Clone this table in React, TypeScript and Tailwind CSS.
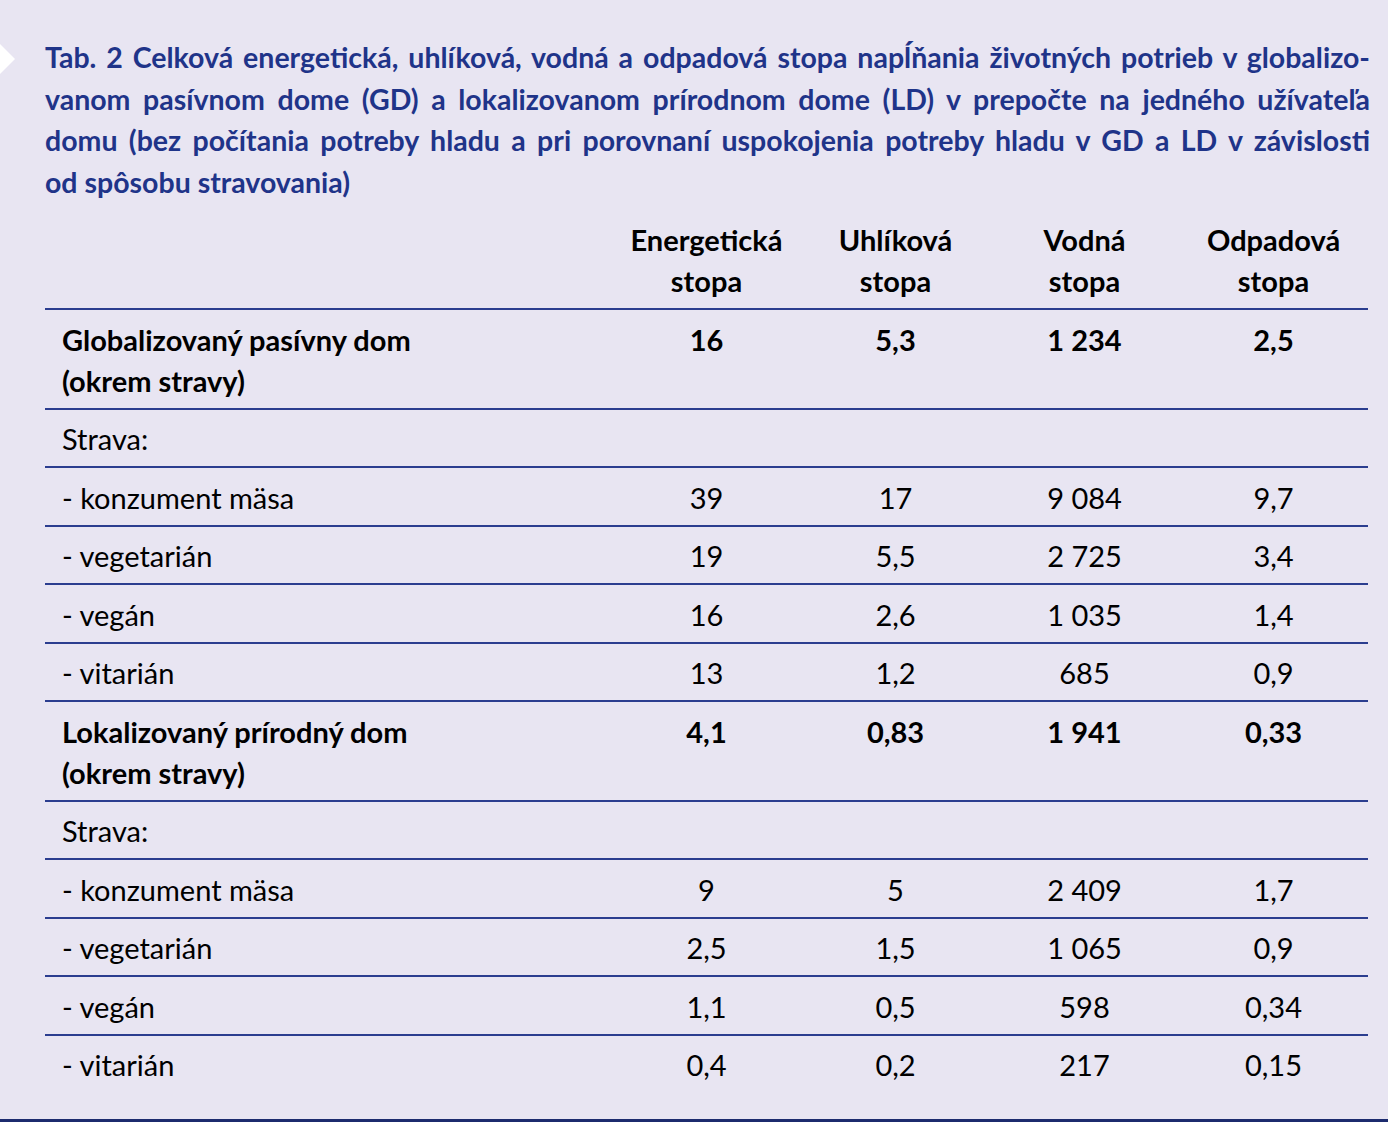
import React from "react";

const LINE = "border-b-2 border-[#2b3d8f]";

type Row = {
  label: string[];
  values: string[];
  bold?: boolean;
  line?: boolean;
};

const ROWS: Row[] = [
  { label: ["Globalizovaný pasívny dom", "(okrem stravy)"], values: ["16", "5,3", "1 234", "2,5"], bold: true, line: true },
  { label: ["Strava:"], values: ["", "", "", ""], line: true },
  { label: ["- konzument mäsa"], values: ["39", "17", "9 084", "9,7"], line: true },
  { label: ["- vegetarián"], values: ["19", "5,5", "2 725", "3,4"], line: true },
  { label: ["- vegán"], values: ["16", "2,6", "1 035", "1,4"], line: true },
  { label: ["- vitarián"], values: ["13", "1,2", "685", "0,9"], line: true },
  { label: ["Lokalizovaný prírodný dom", "(okrem stravy)"], values: ["4,1", "0,83", "1 941", "0,33"], bold: true, line: true },
  { label: ["Strava:"], values: ["", "", "", ""], line: true },
  { label: ["- konzument mäsa"], values: ["9", "5", "2 409", "1,7"], line: true },
  { label: ["- vegetarián"], values: ["2,5", "1,5", "1 065", "0,9"], line: true },
  { label: ["- vegán"], values: ["1,1", "0,5", "598", "0,34"], line: true },
  { label: ["- vitarián"], values: ["0,4", "0,2", "217", "0,15"] },
];

const TITLE = [
  "Tab. 2 Celková energetická, uhlíková, vodná a odpadová stopa napĺňania životných potrieb v globalizo-",
  "vanom pasívnom dome (GD) a lokalizovanom prírodnom dome (LD) v prepočte na jedného užívateľa",
  "domu (bez počítania potreby hladu a pri porovnaní uspokojenia potreby hladu v GD a LD v závislosti",
];

const HEADERS = [
  ["Energetická", "stopa"],
  ["Uhlíková", "stopa"],
  ["Vodná", "stopa"],
  ["Odpadová", "stopa"],
];

function TableRow({ row }: { row: Row }) {
  return (
    <div
      className={`grid grid-cols-[567px_189px_189px_189px_189px] pt-[8.5px] pb-[7px] ${row.line ? LINE : ""} ${
        row.bold ? "font-bold" : ""
      }`}
    >
      <div className="pl-[17px]">
        {row.label.map((l) => (
          <div key={l}>{l}</div>
        ))}
      </div>
      {row.values.map((v, i) => (
        <div key={i} className="text-center">
          {v}
        </div>
      ))}
    </div>
  );
}

export default function App() {
  return (
    <div className="h-[1122px] w-[1388px] bg-[#e8e5f2] flex flex-col font-['Lato','Liberation_Sans',sans-serif] text-black">
      <div className="flex items-start pt-[37px]">
        <svg width="15" height="30" viewBox="0 0 15 30" className="mt-[7px] shrink-0">
          <polygon points="0,0 15,15 0,30" fill="#ffffff" />
        </svg>
        <div className="ml-[30px] w-[1325px] text-[28.5px] leading-[41.5px] font-bold text-[#1f3489]">
          {TITLE.map((t) => (
            <div key={t} className="text-justify [text-align-last:justify]">
              {t}
            </div>
          ))}
          <div>od spôsobu stravovania)</div>
        </div>
      </div>

      <div className="ml-[45px] w-[1323px] mt-[16px] text-[29px] leading-[41px]">
        <div className={`grid grid-cols-[567px_189px_189px_189px_189px] pb-[7px] font-bold ${LINE}`}>
          <div />
          {HEADERS.map((h) => (
            <div key={h[0]} className="text-center">
              <div>{h[0]}</div>
              <div>{h[1]}</div>
            </div>
          ))}
        </div>
        {ROWS.map((r, i) => (
          <TableRow key={i} row={r} />
        ))}
      </div>

      <div className="flex-1" />
      <div className="h-[3px] bg-[#1c2b6e]" />
    </div>
  );
}
